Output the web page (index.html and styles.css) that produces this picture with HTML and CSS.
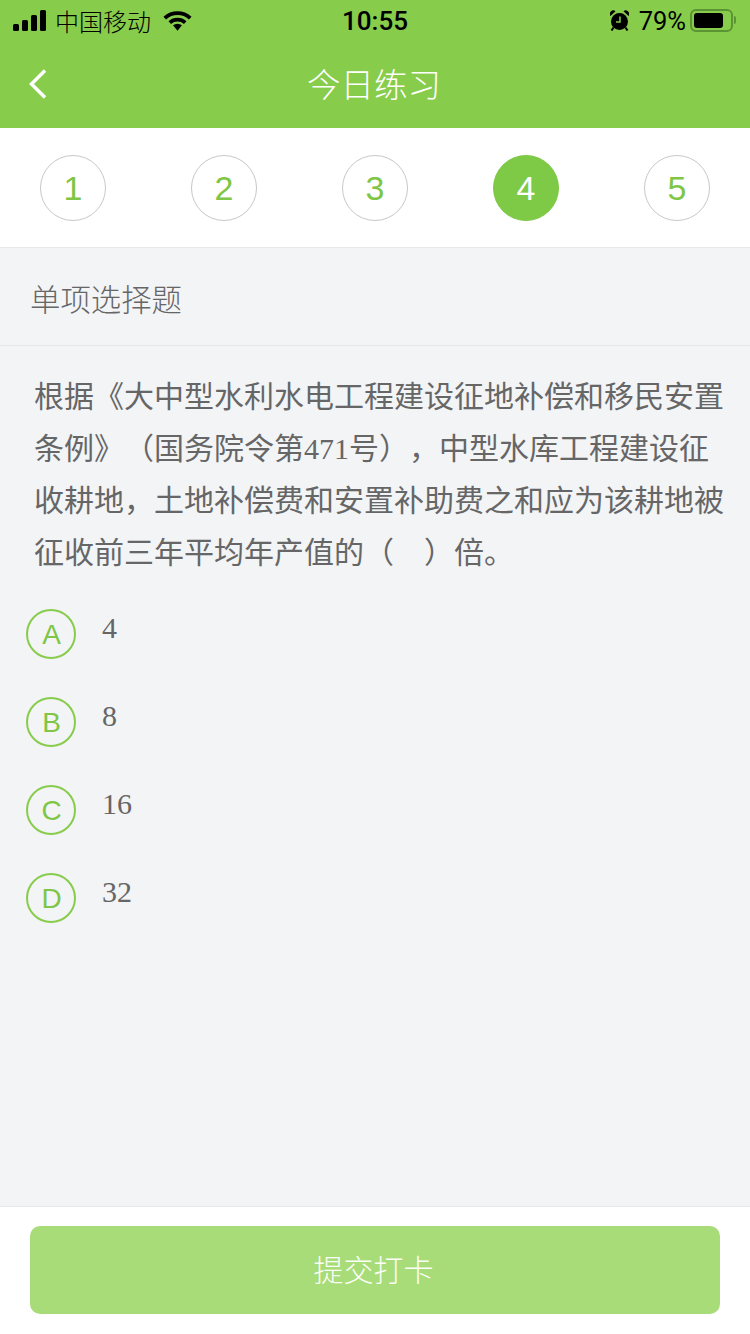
FILE: index.html
```html
<!DOCTYPE html>
<html lang="zh-CN">
<head>
    <meta charset="UTF-8">
    <meta name="viewport" content="width=device-width, initial-scale=1.0">
    <title>今日练习</title>
    <link rel="stylesheet" href="styles.css">
</head>
<body>
    <header class="top">
        <div class="status">
            <div class="status-left">
                <svg class="signal" width="33" height="21" viewBox="0 0 33 21">
                    <rect x="0" y="14" width="6" height="7" rx="1.500"/>
                    <rect x="9" y="10" width="6" height="11" rx="1.500"/>
                    <rect x="18" y="5" width="6" height="16" rx="1.500"/>
                    <rect x="27" y="0" width="6" height="21" rx="1.500"/>
                </svg>
                <span class="carrier">中国移动</span>
                <svg class="wifi" width="29" height="21" viewBox="0 0 30 21">
                    <path d="M15 21l-4.600-5.500a7 7 0 0 1 9.200 0z"/>
                    <path d="M5.700 11.300l2.600 2.900a10 10 0 0 1 13.400 0l2.600-2.900a14 14 0 0 0-18.600 0z"/>
                    <path d="M0.500 6.500l2.700 3a17.500 17.500 0 0 1 23.600 0l2.700-3a21.500 21.500 0 0 0-29 0z"/>
                </svg>
            </div>
            <div class="clock">10:55</div>
            <div class="status-right">
                <svg class="alarm" width="19" height="21" viewBox="0 0 19 21">
                    <circle cx="9.500" cy="11.500" r="8.500"/>
                    <path d="M0.500 6a3.500 3.500 0 0 1 5-4.800zM18.500 6a3.500 3.500 0 0 0-5-4.800z"/>
                    <path d="M3.500 17.500l-2 3M15.500 17.500l2 3" stroke="#000" stroke-width="2"/>
                    <path d="M10 6.500v5.500h-4" fill="none" stroke="#87cc4b" stroke-width="1.500"/>
                </svg>
                <span class="percent">79%</span>
                <div class="battery"><div class="battery-fill"></div></div>
                <div class="battery-cap"></div>
            </div>
        </div>
        <div class="navbar">
            <svg class="back" width="20" height="32" viewBox="0 0 20 32">
                <path d="M17 2.500L3.500 16 17 29.500" fill="none" stroke="#fff" stroke-width="3.500"/>
            </svg>
            <h1>今日练习</h1>
        </div>
    </header>

    <nav class="steps">
        <div class="step">1</div>
        <div class="step">2</div>
        <div class="step">3</div>
        <div class="step active">4</div>
        <div class="step">5</div>
    </nav>

    <main class="content">
        <div class="type">单项选择题</div>
        <p class="question">根据《大中型水利水电工程建设征地补偿和移民安置条例》（国务院令第471号），中型水库工程建设征收耕地，土地补偿费和安置补助费之和应为该耕地被征收前三年平均年产值的（&emsp;）倍。</p>
        <ul class="options">
            <li class="option"><span class="letter">A</span><span class="value">4</span></li>
            <li class="option"><span class="letter">B</span><span class="value">8</span></li>
            <li class="option"><span class="letter">C</span><span class="value">16</span></li>
            <li class="option"><span class="letter">D</span><span class="value">32</span></li>
        </ul>
    </main>

    <footer class="bottom">
        <button class="submit" type="button">提交打卡</button>
    </footer>
</body>
</html>
```

FILE: styles.css
```css
* {
    box-sizing: border-box;
}
html, body {
    height: 100%;
}
body {
    margin: 0;
    display: flex;
    flex-direction: column;
    background-color: #f3f4f6;
    font-family: "Liberation Sans", "Noto Sans CJK SC", sans-serif;
    overflow: hidden;
}
.top {
    height: 128px;
    background-color: #87cc4b;
    flex: none;
}
.status {
    height: 40px;
    display: flex;
    align-items: center;
    justify-content: space-between;
    position: relative;
    padding: 0 13px;
    color: #000;
}
.status svg {
    fill: #000;
    display: block;
}
.status-left, .status-right {
    display: flex;
    align-items: center;
}
.carrier {
    font-size: 24px;
    margin-left: 9px;
    font-weight: 300;
}
.wifi {
    margin-left: 12px;
}
.clock {
    position: absolute;
    left: 0;
    right: 0;
    top: 6px;
    text-align: center;
    font-size: 26px;
    font-weight: 500;
    font-family: Roboto, sans-serif;
}
.alarm {
    margin-right: -1px;
}
.percent {
    font-family: Roboto, sans-serif;
    font-size: 25.500px;
    margin: 1px 0 0 11px;
}
.battery {
    width: 43px;
    height: 23px;
    border: 2px solid #5b9433;
    border-radius: 6px;
    padding: 2px;
    margin-left: 4px;
}
.battery-fill {
    width: 29px;
    height: 100%;
    background-color: #000;
    border-radius: 3px;
}
.battery-cap {
    width: 2px;
    height: 8px;
    background-color: #5b9433;
    border-radius: 0 2px 2px 0;
    margin: 0 1px 0 1px;
}
.navbar {
    height: 88px;
    padding-bottom: 4px;
    display: flex;
    align-items: center;
    justify-content: center;
    position: relative;
}
.back {
    position: absolute;
    left: 28px;
    top: 28px;
}
.navbar h1 {
    margin: 0 2px 0 0;
    font-size: 33.500px;
    font-weight: 300;
    color: #fff;
}
.steps {
    height: 120px;
    flex: none;
    display: flex;
    justify-content: space-between;
    align-items: center;
    padding: 1px 40px 0;
    background-color: #fff;
    border-bottom: 1px solid #e8e8e8;
}
.step {
    width: 66px;
    height: 66px;
    padding-top: 1px;
    border: 1px solid #c8c8c8;
    border-radius: 50%;
    display: flex;
    align-items: center;
    justify-content: center;
    font-size: 34px;
    color: #7fc646;
}
.step.active {
    background-color: #7ec946;
    border-color: #7ec946;
    color: #fff;
}
.content {
    flex: 1;
}
.type {
    height: 98px;
    padding: 3px 30px 0;
    display: flex;
    align-items: center;
    font-size: 30.400px;
    font-weight: 300;
    color: #666;
    border-bottom: 1px solid #e8e8e8;
}
.question {
    margin: 25px 0 0;
    padding: 0 25px 0 34px;
    font-family: "Liberation Serif", "Noto Sans CJK SC", serif;
    font-size: 30px;
    line-height: 52px;
    color: #666;
    text-spacing-trim: space-all;
}
.options {
    list-style: none;
    margin: 30px 0 0;
    padding: 0 0 0 26px;
}
.option {
    height: 88px;
    display: flex;
    align-items: flex-start;
}
.letter {
    width: 50px;
    height: 50px;
    border: 2px solid #87cc4b;
    border-radius: 50%;
    padding: 2px 0 0 1px;
    display: flex;
    align-items: center;
    justify-content: center;
    font-size: 28px;
    color: #7fc646;
}
.value {
    margin-left: 26px;
    font-family: "Liberation Serif", serif;
    font-size: 30px;
    line-height: 38px;
    color: #666;
}
.bottom {
    height: 128px;
    flex: none;
    padding: 19px 30px 0;
    background-color: #fff;
    border-top: 1px solid #e8e8e8;
}
.submit {
    display: block;
    width: 100%;
    height: 88px;
    border: none;
    border-radius: 10px;
    padding: 0 3px 4px 0;
    background-color: #a8dc78;
    color: #fbfef7;
    font-family: "Noto Sans CJK SC", sans-serif;
    font-weight: 300;
    font-size: 30px;
}
```
